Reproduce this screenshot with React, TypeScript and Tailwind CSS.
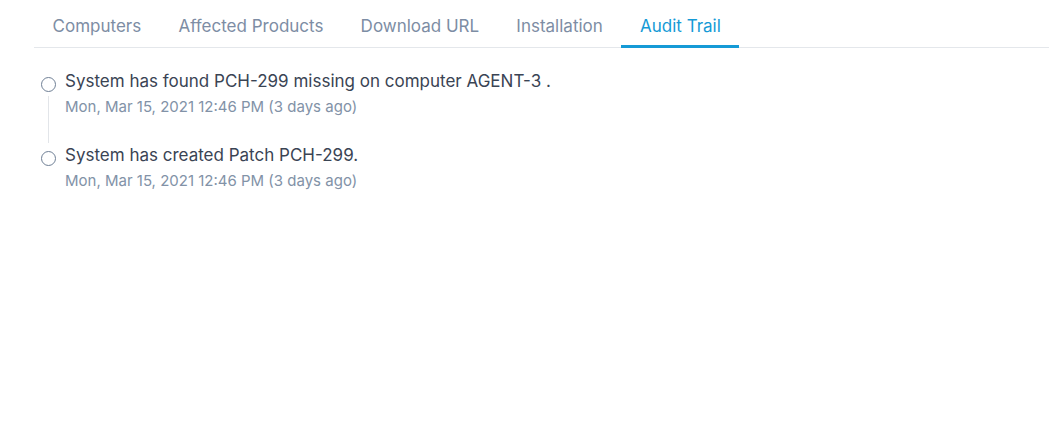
import React from 'react'

const tabs = ['Computers', 'Affected Products', 'Download URL', 'Installation', 'Audit Trail']

const events = [
  { text: 'System has found PCH-299 missing on computer AGENT-3 .', time: 'Mon, Mar 15, 2021 12:46 PM (3 days ago)' },
  { text: 'System has created Patch PCH-299.', time: 'Mon, Mar 15, 2021 12:46 PM (3 days ago)' },
]

export default function App() {
  const active = 'Audit Trail'
  return (
    <div className="min-h-[443px] w-full bg-white" style={{ fontFamily: 'Inter, "Noto Sans", sans-serif' }}>
      {/* tab strip */}
      <div className="ml-[34px] flex border-b border-[#e4e7eb]">
        {tabs.map((t) => (
          <button
            key={t}
            className={
              '-mb-px border-b-[3px] px-[18.6px] pb-[7px] pt-[14px] text-[17px] leading-6 ' +
              (t === active ? 'border-[#159ad6] text-[#159ad6]' : 'border-transparent text-[#7d8da4]')
            }
          >
            {t}
          </button>
        ))}
      </div>

      {/* audit trail */}
      <div className="pl-[41px] pt-[21px]">
        {events.map((e, i) => (
          <div key={i} className="flex">
            <div className="flex w-[15px] flex-col items-center">
              <span className="mt-[8px] h-[15px] w-[15px] shrink-0 rounded-full border border-[#6f7f95]" />
              {i < events.length - 1 && <span className="mt-[4px] w-px flex-1 bg-[#e2e5e9]" />}
            </div>
            <div className={'ml-[9px] ' + (i < events.length - 1 ? 'pb-[26px]' : '')}>
              <p className="text-[17px] leading-6 text-[#3a4454]">{e.text}</p>
              <p className="mt-[4px] text-[15px] leading-5 text-[#8292a7]">{e.time}</p>
            </div>
          </div>
        ))}
      </div>
    </div>
  )
}
